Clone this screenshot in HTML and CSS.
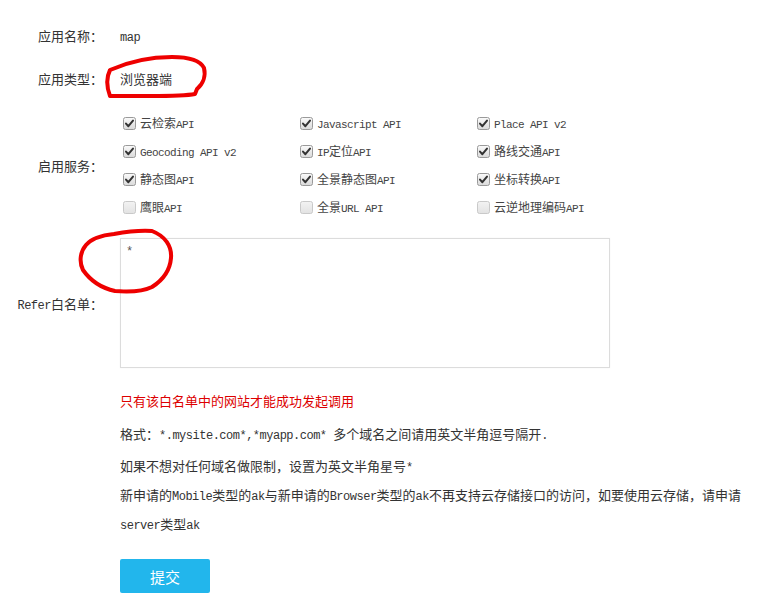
FILE: index.html
```html
<!DOCTYPE html>
<html lang="zh-CN">
<head>
<meta charset="utf-8">
<title>应用设置</title>
<link rel="stylesheet" href="styles.css">
</head>
<body>
<svg class="defs" width="0" height="0" aria-hidden="true">
  <defs>
    <linearGradient id="gOn" x1="0" y1="0" x2="0" y2="1">
      <stop offset="0" stop-color="#fbfbfb"/>
      <stop offset="1" stop-color="#d9d9d9"/>
    </linearGradient>
    <linearGradient id="gOff" x1="0" y1="0" x2="0" y2="1">
      <stop offset="0" stop-color="#f3f3f3"/>
      <stop offset="1" stop-color="#e2e2e2"/>
    </linearGradient>
    <symbol id="cbOn" viewBox="0 0 13 13">
      <rect x="0.5" y="0.5" width="12" height="12" rx="2" fill="url(#gOn)" stroke="#9a9a9a"/>
      <path d="M3 6.6 L5.4 9.2 L10 3.6" fill="none" stroke="#333" stroke-width="2" stroke-linecap="round" stroke-linejoin="round"/>
    </symbol>
    <symbol id="cbOff" viewBox="0 0 13 13">
      <rect x="0.5" y="0.5" width="12" height="12" rx="2" fill="url(#gOff)" stroke="#c9c9c9"/>
    </symbol>
  </defs>
</svg>

<main class="page">
  <div class="row r-name">
    <div class="label">应用名称：</div>
    <div class="val"><span class="m">map</span></div>
  </div>

  <div class="row r-type">
    <div class="label">应用类型：</div>
    <div class="val">浏览器端</div>
  </div>

  <div class="row r-svc">
    <div class="label">启用服务：</div>
    <div class="val checks">
      <label class="chk"><svg class="cb"><use href="#cbOn"/></svg><span>云检索<span class="s">API</span></span></label>
      <label class="chk"><svg class="cb"><use href="#cbOn"/></svg><span><span class="s">Javascript API</span></span></label>
      <label class="chk"><svg class="cb"><use href="#cbOn"/></svg><span><span class="s">Place API v2</span></span></label>
      <label class="chk"><svg class="cb"><use href="#cbOn"/></svg><span><span class="s">Geocoding API v2</span></span></label>
      <label class="chk"><svg class="cb"><use href="#cbOn"/></svg><span><span class="s">IP</span>定位<span class="s">API</span></span></label>
      <label class="chk"><svg class="cb"><use href="#cbOn"/></svg><span>路线交通<span class="s">API</span></span></label>
      <label class="chk"><svg class="cb"><use href="#cbOn"/></svg><span>静态图<span class="s">API</span></span></label>
      <label class="chk"><svg class="cb"><use href="#cbOn"/></svg><span>全景静态图<span class="s">API</span></span></label>
      <label class="chk"><svg class="cb"><use href="#cbOn"/></svg><span>坐标转换<span class="s">API</span></span></label>
      <label class="chk"><svg class="cb"><use href="#cbOff"/></svg><span>鹰眼<span class="s">API</span></span></label>
      <label class="chk"><svg class="cb"><use href="#cbOff"/></svg><span>全景<span class="s">URL API</span></span></label>
      <label class="chk"><svg class="cb"><use href="#cbOff"/></svg><span>云逆地理编码<span class="s">API</span></span></label>
    </div>
  </div>

  <div class="row r-refer">
    <div class="label"><span class="m">Refer</span>白名单：</div>
    <div class="val"><textarea class="refer">*</textarea></div>
  </div>

  <div class="notes">
    <p class="warn">只有该白名单中的网站才能成功发起调用</p>
    <p class="gap">格式：<span class="m">*.mysite.com*,*myapp.com* </span>多个域名之间请用英文半角逗号隔开<span class="m">.</span></p>
    <p>如果不想对任何域名做限制，设置为英文半角星号<span class="m">*</span></p>
    <p>新申请的<span class="m">Mobile</span>类型的<span class="m">ak</span>与新申请的<span class="m">Browser</span>类型的<span class="m">ak</span>不再支持云存储接口的访问，如要使用云存储，请申请<span class="m">server</span>类型<span class="m">ak</span></p>
    <button class="submit" type="button">提交</button>
  </div>
</main>

<svg class="marks" width="768" height="596" viewBox="0 0 768 596" aria-hidden="true">
  <path d="M110 96 C107 88 106 78 110 70 C128 62 150 57 172 57 C188 57 200 60 204 68 C206 76 203 84 197 89 L195 94 C190 95 170 96 150 96 C135 96 120 96 110 96 Z" fill="none" stroke="#ee0000" stroke-width="4" stroke-linejoin="round"/>
  <path d="M152 231 C165 236 172 246 171 258 C170 270 163 280 152 287 C142 292 128 292 115 291 C101 288 90 280 83 270 C79 262 80 252 86 245 C93 237 104 235 114 234 C125 232 138 230 152 231 Z" fill="none" stroke="#ee0000" stroke-width="4" stroke-linejoin="round"/>
</svg>
</body>
</html>
```

FILE: styles.css
```css
html, body {
  margin: 0;
  padding: 0;
  background: #ffffff;
}

body {
  font-family: "Noto Sans CJK SC", "Noto Sans", sans-serif;
  font-size: 13px;
  color: #333333;
  position: relative;
  width: 768px;
  height: 596px;
  overflow: hidden;
}

.defs {
  position: absolute;
  width: 0;
  height: 0;
}

.m {
  font-family: "Liberation Mono", "DejaVu Sans Mono", monospace;
  font-size: 12px;
  letter-spacing: -0.5px;
  line-height: 12px;
}

.s {
  font-family: "Liberation Mono", "DejaVu Sans Mono", monospace;
  font-size: 11px;
  letter-spacing: -0.6px;
  line-height: 11px;
}

.page {
  padding-top: 26px;
}

.row {
  display: flex;
  align-items: center;
}

.label {
  width: 103px;
  flex: none;
  text-align: right;
  white-space: nowrap;
}

.val {
  margin-left: 17px;
}

.r-name,
.r-type {
  height: 20px;
  line-height: 20px;
}

.r-type {
  margin-top: 23px;
}

.r-svc {
  margin-top: 20px;
}

.checks {
  display: grid;
  grid-template-columns: repeat(3, 177px);
  grid-auto-rows: 28px;
}

.chk {
  display: flex;
  align-items: center;
  font-size: 12px;
  line-height: 16px;
  color: #444444;
  white-space: nowrap;
}

.cb {
  width: 13px;
  height: 13px;
  margin-left: 3px;
  margin-right: 4px;
  flex: none;
}

.r-refer {
  margin-top: 17px;
}

.refer {
  display: block;
  box-sizing: border-box;
  width: 490px;
  height: 130px;
  margin: 0;
  padding: 6px 5px;
  border: 1px solid #dcdcdc;
  box-shadow: 0 0 2px rgba(0, 0, 0, 0.04);
  font-family: "Liberation Mono", monospace;
  font-size: 12px;
  color: #555555;
  resize: none;
  background: #ffffff;
}

.notes {
  margin-left: 120px;
  margin-top: 18px;
  width: 630px;
}

.notes p {
  margin: 0;
  line-height: 29px;
}

.notes .warn {
  color: #dd0000;
  margin-bottom: 4px;
}

.notes .gap {
  margin-bottom: 3px;
}

.submit {
  display: block;
  margin-top: 21px;
  width: 90px;
  height: 34px;
  border: none;
  border-radius: 2px;
  background: #22b6ec;
  color: #ffffff;
  font-family: "Noto Sans CJK SC", sans-serif;
  font-size: 15px;
  padding: 0;
}

.marks {
  position: absolute;
  left: 0;
  top: 0;
  pointer-events: none;
}
```
